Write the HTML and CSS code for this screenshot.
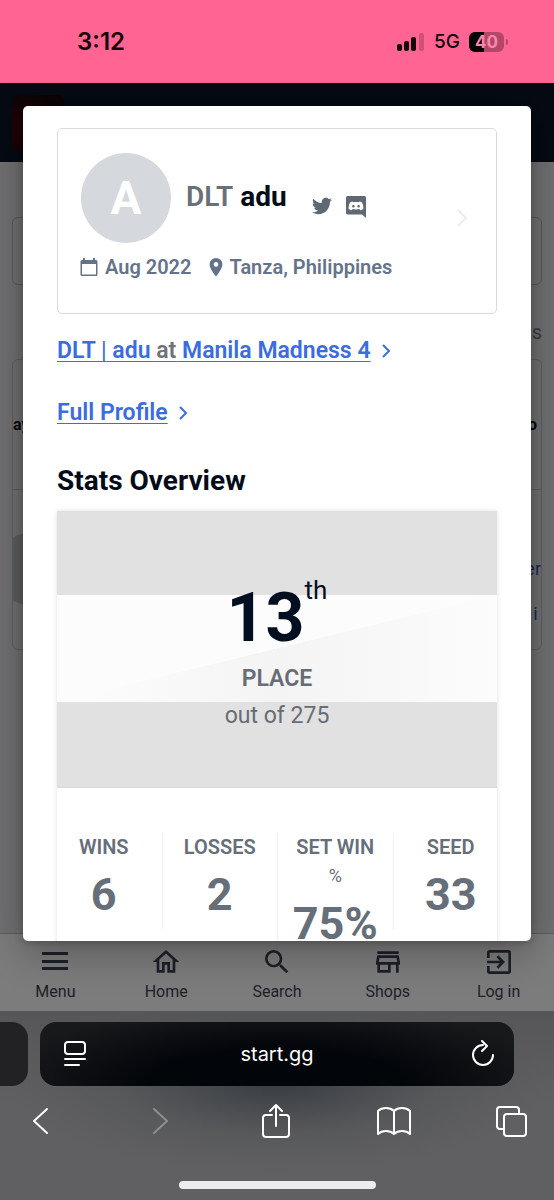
FILE: index.html
```
<!DOCTYPE html>
<html lang="en">
<head>
  <meta charset="UTF-8">
  <meta name="viewport" content="width=device-width, initial-scale=1">
  <title>start.gg</title>
  <link rel="stylesheet" href="styles.css">
</head>
<body>
<div class="status-bar">
  <span class="clock">3:12</span>
  <div class="status-icons">
    <svg class="signal" viewBox="0 0 28 20" aria-hidden="true">
      <rect x="0" y="12" width="5" height="7" rx="2"/>
      <rect x="7" y="9" width="5" height="10" rx="2"/>
      <rect x="14" y="5" width="5" height="14" rx="2"/>
      <rect x="22" y="1" width="5" height="18" rx="2" opacity=".2"/>
    </svg>
    <span class="network">5G</span>
    <span class="battery">40</span>
  </div>
</div>

<div class="viewport">
  <div class="site">
    <header class="site-header"><div class="site-logo"></div></header>
    <main class="site-main">
      <div class="filter-box"></div>
      <div class="count">s</div>
      <div class="sets">
        <div class="sets-head"><span>ay</span><span class="sets-end">o</span></div>
        <div class="sets-row">
          <div class="sets-avatar"></div>
          <div class="sets-links"><a href="#">er</a><a href="#">i</a></div>
        </div>
      </div>
    </main>
    <nav class="tab-bar">
      <a href="#">
        <svg viewBox="0 0 32 32"><path d="M3 6h26v3H3zM3 14h26v3H3zM3 21h26v3H3z"/></svg>
        Menu
      </a>
      <a href="#">
        <svg viewBox="0 0 24 24"><path d="M12 5.69l5 4.5V18h-2v-6H9v6H7v-7.81l5-4.5M12 3L2 12h3v8h6v-6h2v6h6v-8h3L12 3z"/></svg>
        Home
      </a>
      <a href="#">
        <svg viewBox="0 0 24 24"><path d="M15.5 14h-.79l-.28-.27A6.47 6.47 0 0 0 16 9.5 6.5 6.5 0 1 0 9.5 16c1.61 0 3.09-.59 4.23-1.57l.27.28v.79l5 4.99L20.49 19l-4.99-5zm-6 0C7.01 14 5 11.99 5 9.5S7.01 5 9.5 5 14 7.01 14 9.5 11.99 14 9.5 14z"/></svg>
        Search
      </a>
      <a href="#">
        <svg viewBox="0 0 24 24"><path d="M18.36 9l.6 3H5.04l.6-3h12.72M20 4H4v2h16V4zm0 3H4l-1 5v2h1v6h10v-6h4v6h2v-6h1v-2l-1-5zM6 18v-4h6v4H6z"/></svg>
        Shops
      </a>
      <a href="#">
        <svg viewBox="0 0 24 24"><path d="M10.09 15.59L11.5 17l5-5-5-5-1.41 1.41L12.67 11H3v2h9.67l-2.58 2.59zM19 3H5a2 2 0 0 0-2 2v4h2V5h14v14H5v-4H3v4a2 2 0 0 0 2 2h14a2 2 0 0 0 2-2V5a2 2 0 0 0-2-2z"/></svg>
        Log in
      </a>
    </nav>
  </div>

  <div class="modal" role="dialog" aria-label="Player">
    <section class="profile">
      <div class="profile-top">
        <div class="avatar">A</div>
        <div class="name"><span class="prefix">DLT</span> adu</div>
        <div class="social">
          <a href="#" aria-label="Twitter">
            <svg class="twitter" viewBox="0 0 24 24"><path d="M23.954 4.569c-.885.389-1.83.654-2.825.775 1.014-.611 1.794-1.574 2.163-2.723-.951.555-2.005.959-3.127 1.184-.896-.959-2.173-1.559-3.591-1.559-2.717 0-4.92 2.203-4.92 4.917 0 .39.045.765.127 1.124C7.691 8.094 4.066 6.13 1.64 3.161c-.427.722-.666 1.561-.666 2.475 0 1.71.87 3.213 2.188 4.096-.807-.026-1.566-.248-2.228-.616v.061c0 2.385 1.693 4.374 3.946 4.827-.413.111-.849.171-1.296.171-.314 0-.615-.03-.916-.086.631 1.953 2.445 3.377 4.604 3.417-1.68 1.319-3.809 2.105-6.102 2.105-.39 0-.779-.023-1.17-.067 2.189 1.394 4.768 2.209 7.557 2.209 9.054 0 13.999-7.496 13.999-13.986 0-.209 0-.42-.015-.63.961-.689 1.8-1.56 2.46-2.548z"/></svg>
          </a>
          <a href="#" aria-label="Discord">
            <svg class="discord" viewBox="0 0 22 24">
              <path fill-rule="evenodd" d="M2.5 1h17A1.8 1.8 0 0 1 21 2.800V23l-4-3.500H2.500A1.800 1.800 0 0 1 1 17.700V2.800A1.800 1.800 0 0 1 2.500 1zM7.500 6.500C5.500 7 5 7.500 5 7.500c-1.500 3-1.400 6.300-1.400 6.300 1.200 1.500 3.200 1.500 3.200 1.500l.9-1.200c2 .6 4.600.6 6.600 0l.9 1.200s2 0 3.200-1.500c0 0 .1-3.300-1.400-6.300 0 0-.5-.5-2.500-1l-.6.800c-1.700-.4-4.100-.4-5.800 0zM8.400 10a1.300 1.300 0 1 1 0 2.600 1.300 1.300 0 0 1 0-2.600zM13.600 10a1.300 1.300 0 1 1 0 2.600 1.300 1.300 0 0 1 0-2.600z"/>
            </svg>
          </a>
        </div>
        <svg class="more" viewBox="0 0 12 20"><path d="M2 2l8 8-8 8"/></svg>
      </div>
      <div class="meta">
        <svg class="cal" viewBox="0 0 18 20"><path fill-rule="evenodd" d="M3 1h2v2h8V1h2v2h1a1.500 1.500 0 0 1 1.500 1.500v13A1.500 1.500 0 0 1 16 19H2a1.500 1.500 0 0 1-1.500-1.500v-13A1.500 1.500 0 0 1 2 3h1zM2 7v10.500h14V7z"/></svg>
        <span>Aug 2022</span>
        <svg class="pin" viewBox="0 0 14 20"><path fill-rule="evenodd" d="M7 1a6.400 6.400 0 0 0-6.400 6.400C.6 12 7 19.500 7 19.500s6.400-7.500 6.400-12.100A6.400 6.400 0 0 0 7 1zm0 4.100a2.300 2.300 0 1 1 0 4.600 2.300 2.300 0 0 1 0-4.600z"/></svg>
        <span>Tanza, Philippines</span>
      </div>
    </section>

    <p class="link-row">
      <a href="#">DLT <i>|</i> adu <span class="at">at</span> Manila Madness 4</a>
      <svg viewBox="0 0 10 16"><path d="M1 2l6 6-6 6"/></svg>
    </p>
    <p class="link-row">
      <a href="#">Full Profile</a>
      <svg viewBox="0 0 10 16"><path d="M1 2l6 6-6 6"/></svg>
    </p>

    <h2>Stats Overview</h2>
    <section class="stats">
      <div class="banner">
        <div class="place">13<sup>th</sup></div>
        <div class="place-label">PLACE</div>
        <div class="place-total">out of 275</div>
      </div>
      <div class="columns">
        <div class="stat"><div class="stat-label">WINS</div><div class="stat-value">6</div></div>
        <div class="stat"><div class="stat-label">LOSSES</div><div class="stat-value">2</div></div>
        <div class="stat"><div class="stat-label">SET WIN <small>%</small></div><div class="stat-value">75%</div></div>
        <div class="stat"><div class="stat-label">SEED</div><div class="stat-value">33</div></div>
      </div>
    </section>
  </div>
</div>

<footer class="browser">
  <div class="address-row">
    <div class="prev-tab"></div>
    <div class="address">
      <button aria-label="Page menu">
        <svg viewBox="0 0 24 28"><rect x="2" y="2" width="20" height="12" rx="3"/><path d="M2 19h20M2 25h14"/></svg>
      </button>
      <span>start.gg</span>
      <button aria-label="Reload">
        <svg viewBox="0 0 24 28"><path d="M12 5a10 10 0 1 0 10 10M11 1l5 5-5 5"/></svg>
      </button>
    </div>
  </div>
  <div class="tools">
    <button aria-label="Back"><svg viewBox="0 0 32 36"><path d="M22 6L9 18l13 12"/></svg></button>
    <button aria-label="Forward" disabled><svg viewBox="0 0 32 36"><path d="M12 6l13 12-13 12"/></svg></button>
    <button aria-label="Share"><svg viewBox="0 0 32 36"><path d="M14 12H8a3 3 0 0 0-3 3v16a3 3 0 0 0 3 3h20a3 3 0 0 0 3-3V15a3 3 0 0 0-3-3h-6M18 23V3M12 8l6-6 6 6"/></svg></button>
    <button aria-label="Bookmarks"><svg class="book" viewBox="0 0 36 36"><path d="M19 8C15 4 7 4 3 8v23c4-4 12-4 16 0 4-4 12-4 16 0V8c-4-4-12-4-16 0zM19 8v23"/></svg></button>
    <button aria-label="Tabs"><svg viewBox="0 0 32 36"><path d="M8 26H5a3 3 0 0 1-3-3V7a3 3 0 0 1 3-3h16a3 3 0 0 1 3 3v3"/><rect x="9" y="11" width="22" height="22" rx="3"/></svg></button>
  </div>
  <div class="home-indicator"></div>
</footer>
</body>
</html>
```
FILE: styles.css
```
* { box-sizing: border-box; }
body {
  margin: 0;
  min-height: 100vh;
  display: flex;
  flex-direction: column;
  font-family: Roboto, "Liberation Sans", sans-serif;
  background: #606062;
}
a { color: inherit; text-decoration: none; }
button { padding: 0; border: none; background: none; color: inherit; }
svg { display: block; fill: currentColor; flex: none; }

/* phone status bar */
.status-bar {
  height: 83px;
  padding: 0 50px 0 77px;
  display: flex;
  align-items: center;
  justify-content: space-between;
  background: #ff6492;
  color: #150609;
  font-family: Inter, sans-serif;
}
.clock { font-size: 24px; font-weight: 600; }
.status-icons { display: flex; align-items: center; gap: 9px; }
.signal { width: 28px; height: 20px; }
.network { font-size: 19px; font-weight: 500; }
.battery {
  position: relative;
  width: 35px;
  line-height: 20px;
  border-radius: 6px;
  background: linear-gradient(90deg, #000 42%, #b3476a 42%);
  color: #ff85aa;
  font-size: 17px;
  font-weight: 700;
  text-align: center;
}
.battery::after {
  content: "";
  position: absolute;
  right: -4px;
  top: 7px;
  width: 2px;
  height: 6px;
  border-radius: 0 2px 2px 0;
  background: #b3476a;
}

/* page behind the modal */
.viewport { flex: 1; position: relative; display: flex; overflow: hidden; }
.site { flex: 1; display: flex; flex-direction: column; background: #707072; }
.site-header { height: 79px; padding: 12px; background: #050a13; }
.site-logo {
  width: 52px;
  height: 56px;
  border-radius: 6px;
  background: radial-gradient(circle at 20% 60%, #240307, #0b0406 70%);
}
.site-main { flex: 1; padding: 55px 12px 0; }
.filter-box { height: 68px; border: 1px solid #58585a; border-radius: 6px; }
.count { margin: 34px 0 14px; line-height: 26px; font-size: 20px; text-align: right; color: #3a3c3f; }
.sets { height: 291px; border: 1px solid #5e5e60; border-radius: 6px; overflow: hidden; }
.sets-head {
  height: 130px;
  display: flex;
  justify-content: space-between;
  align-items: center;
  border-bottom: 1px solid #5e5e60;
  font-size: 16px;
  font-weight: 700;
  color: #07080a;
}
.sets-end { margin-right: 4px; }
.sets-row { display: flex; justify-content: space-between; padding-top: 43px; }
.sets-avatar { width: 60px; height: 72px; margin-left: -14px; border-radius: 36px; background: #5c5d5f; }
.sets-links { display: flex; flex-direction: column; padding-top: 13px; line-height: 45px; font-size: 18px; color: #1b2c52; }
.sets-links a + a { padding-left: 8px; }

.tab-bar {
  display: flex;
  height: 78px;
  padding-top: 12px;
  border-top: 1px solid #5c5d60;
  background: #7c7c7d;
  color: #1c1f28;
}
.tab-bar a {
  flex: 1;
  display: flex;
  flex-direction: column;
  align-items: center;
  gap: 4px;
  line-height: 20px;
  font-size: 16px;
}
.tab-bar svg { width: 32px; height: 32px; }

/* player modal */
.modal {
  position: absolute;
  inset: 23px 23px 70px;
  padding: 22px 34px 0;
  overflow: hidden;
  border-radius: 5px;
  background: #fff;
  box-shadow: 0 10px 40px rgba(0, 0, 0, .3), 0 2px 8px rgba(0, 0, 0, .2);
}
.profile { height: 186px; padding: 24px 23px; border: 1px solid #d8dadd; border-radius: 5px; }
.profile-top { display: flex; align-items: center; }
.avatar {
  width: 90px;
  height: 90px;
  border-radius: 50%;
  background: #d5d8dd;
  color: #fff;
  font-size: 46px;
  font-weight: 700;
  line-height: 90px;
  text-align: center;
}
.name { margin: 0 0 4px 15px; font-size: 28px; font-weight: 700; color: #020b18; }
.prefix { color: #6a7077; font-weight: 600; }
.social { display: flex; gap: 13px; margin: 18px 0 0 25px; color: #5f6974; }
.twitter { width: 20px; height: 22px; }
.discord { width: 22px; height: 24px; }
.more { width: 12px; height: 20px; margin: 40px 5px 0 auto; fill: none; stroke: #ececee; stroke-width: 2; }
.meta {
  display: flex;
  align-items: center;
  margin-top: 10px;
  line-height: 28px;
  font-size: 20px;
  font-weight: 600;
  color: #65738a;
}
.cal { width: 18px; height: 20px; margin: 0 7px 0 -1px; }
.pin { width: 14px; height: 20px; margin: 0 6px 0 18px; }

.link-row { display: flex; align-items: center; gap: 11px; margin: 21px 0 0; line-height: 32px; font-size: 23px; font-weight: 600; color: #3b6ce0; }
.link-row + .link-row { margin-top: 30px; }
.link-row a { text-decoration: underline; text-decoration-thickness: 1px; text-underline-offset: 3px; }
.link-row i { font-style: normal; font-weight: 400; }
.at { color: #707276; }
.link-row svg { width: 10px; height: 16px; fill: none; stroke: currentColor; stroke-width: 2; }
h2 { margin: 34px 0 12px; line-height: 36px; font-size: 28px; font-weight: 700; color: #020b18; }

.stats { box-shadow: 0 0 5px rgba(0, 0, 0, .12); }
.banner {
  height: 277px;
  padding-top: 67px;
  text-align: center;
  color: #666d75;
  border-bottom: 1px solid #d8d8d8;
  background:
    linear-gradient(90deg, #fcfcfc 8%, rgba(252, 252, 252, 0) 50%, #fcfcfc) 0 84px / 100% 107px no-repeat,
    linear-gradient(to bottom right, #fcfcfc 50%, #f4f4f4 50%) 0 84px / 100% 107px no-repeat,
    #e1e1e1;
}
.place { display: flex; justify-content: center; line-height: 80px; font-size: 68px; font-weight: 700; color: #020f20; }
.place sup { line-height: 24px; font-size: 26px; font-weight: 400; }
.place-label { margin-top: 3px; line-height: 36px; font-size: 23px; font-weight: 600; }
.place-total { line-height: 38px; font-size: 23px; }
.columns { display: grid; grid-template-columns: repeat(4, minmax(0, 1fr)); align-items: start; margin: 0 -11px; padding-top: 45px; }
.stat { padding: 0 14px; text-align: center; color: #666f79; }
.stat + .stat { border-left: 1px solid #f0f0f1; }
.stat-label { line-height: 28px; font-size: 20px; font-weight: 600; }
.stat-label small { font-size: 18px; font-weight: 400; }
.stat-value { line-height: 68px; font-size: 45px; font-weight: 700; }

/* browser controls */
.browser {
  padding: 11px 0;
  color: #fff;
  background: radial-gradient(ellipse 270px 90px at 50% 70px, #3d4146 10%, rgba(80, 82, 84, .5) 60%, rgba(96, 96, 98, 0)), linear-gradient(#565658, #606062 50%);
}
.browser svg { fill: none; stroke: currentColor; stroke-width: 2; stroke-linecap: round; stroke-linejoin: round; }
.address-row { display: flex; gap: 12px; padding-right: 40px; height: 64px; }
.prev-tab { width: 28px; border-radius: 0 16px 16px 0; background: #222224; }
.address {
  flex: 1;
  display: flex;
  align-items: center;
  justify-content: space-between;
  padding: 0 19px 0 23px;
  border-radius: 16px;
  background: radial-gradient(ellipse 60% 120% at 50% 95%, #02050a 45%, #18191b);
  font-family: Inter, sans-serif;
  font-size: 20px;
}
.address span { margin-right: 4px; }
.address svg { width: 24px; height: 28px; }
.tools { display: flex; justify-content: space-between; padding: 17px 27px 0 25px; }
.tools svg { width: 32px; height: 36px; }
.tools .book { width: 36px; }
.tools button:disabled { color: #8f8f91; }
.home-indicator { width: 197px; height: 8px; margin: 42px auto 0; border-radius: 4px; background: #ececec; }
```
